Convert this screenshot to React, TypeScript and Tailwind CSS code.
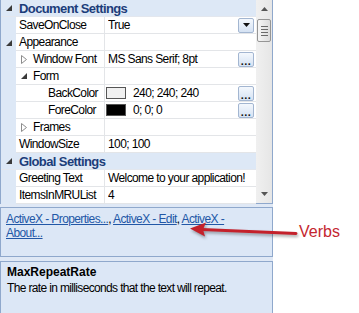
import React from "react";

const FONT = { fontFamily: '"Liberation Sans", Arial, sans-serif' };

function Expanded() {
  return (
    <svg width="6" height="6" viewBox="0 0 6 6" className="block">
      <polygon points="6,0 6,6 0,6" fill="#3a3a3a" />
    </svg>
  );
}

function Collapsed() {
  return (
    <svg width="6" height="9" viewBox="0 0 6 9" className="block">
      <polygon points="0.5,0.5 5.5,4.5 0.5,8.5" fill="none" stroke="#8c8c8c" strokeWidth="1" />
    </svg>
  );
}

function Btn({ kind }: { kind: "drop" | "dots" }) {
  return (
    <div className="mr-[2px] flex h-[15px] w-[16px] shrink-0 items-center justify-center rounded-[2px] border border-[#a3b6d1] bg-gradient-to-b from-[#f4f8fd] to-[#d5e2f3]">
      {kind === "drop" ? (
        <svg width="7" height="4" viewBox="0 0 7 4" className="block">
          <polygon points="0,0 7,0 3.5,4" fill="#111" />
        </svg>
      ) : (
        <span className="mt-[4px] text-[11px] font-bold leading-none tracking-[0.5px] text-[#111]">...</span>
      )}
    </div>
  );
}

function Header({ text }: { text: string }) {
  return (
    <div className="flex h-[17px] items-center border-b border-[#e3e7ee] bg-[#dde8f6]">
      <div className="flex w-[15px] shrink-0 items-center justify-start pl-[5px]">
        <Expanded />
      </div>
      <span className="pl-[3px] text-[13px] font-bold leading-[17px] tracking-[-0.6px] text-[#1c3d7a]">{text}</span>
    </div>
  );
}

type RowProps = {
  level: 0 | 1 | 2;
  tri?: "exp" | "col";
  name: string;
  children?: React.ReactNode;
};

function Row({ level, tri, name, children }: RowProps) {
  return (
    <div className="flex h-[17px]">
      <div className="flex w-[15px] shrink-0 items-center bg-[#dde8f6] pl-[5px]">
        {level === 0 && tri === "exp" ? <Expanded /> : null}
      </div>
      <div className="flex h-[17px] w-[89px] shrink-0 items-center border-b border-r border-[#e3e5e8] bg-white">
        {level === 0 && <div className="w-[3px] shrink-0" />}
        {level === 1 && (
          <div className="ml-[5px] mr-[6px] flex w-[6px] shrink-0 items-center">
            {tri === "exp" ? <Expanded /> : tri === "col" ? <Collapsed /> : null}
          </div>
        )}
        {level === 2 && <div className="w-[32px] shrink-0" />}
        <span className="whitespace-nowrap text-[12px] leading-[16px] tracking-[-0.6px] text-black">{name}</span>
      </div>
      <div className="flex h-[17px] min-w-0 flex-1 items-center border-b border-[#e3e5e8] bg-white">{children}</div>
    </div>
  );
}

function Val({ text, swatch, btn }: { text: string; swatch?: string; btn?: "drop" | "dots" }) {
  return (
    <>
      {swatch ? (
        <div className="ml-[1px] mr-[7px] h-[12px] w-[20px] shrink-0 border border-[#555]" style={{ backgroundColor: swatch }} />
      ) : (
        <div className="w-[3px] shrink-0" />
      )}
      <span className="flex-1 overflow-hidden whitespace-nowrap text-[12px] leading-[16px] tracking-[-0.6px] text-black">{text}</span>
      {btn ? <Btn kind={btn} /> : null}
    </>
  );
}

function Scrollbar() {
  return (
    <div className="flex w-[16px] shrink-0 flex-col items-center bg-gradient-to-r from-[#f0f0f0] to-[#e6e6e6]">
      <div className="flex h-[18px] w-full items-center justify-center">
        <svg width="7" height="4" viewBox="0 0 7 4" className="block">
          <polygon points="3.5,0 7,4 0,4" fill="#555" />
        </svg>
      </div>
      <div className="mt-[1px] flex h-[23px] w-[14px] flex-col items-center justify-center gap-[2px] rounded-[2px] border border-[#959595] bg-gradient-to-r from-[#f6f6f6] to-[#dcdcdc]">
        <div className="h-px w-[7px] bg-[#6a6a6a]" />
        <div className="h-px w-[7px] bg-[#6a6a6a]" />
        <div className="h-px w-[7px] bg-[#6a6a6a]" />
        <div className="h-px w-[7px] bg-[#6a6a6a]" />
      </div>
      <div className="flex-1" />
      <div className="flex h-[18px] w-full items-center justify-center">
        <svg width="7" height="4" viewBox="0 0 7 4" className="block">
          <polygon points="0,0 7,0 3.5,4" fill="#555" />
        </svg>
      </div>
    </div>
  );
}

export default function App() {
  return (
    <div className="relative h-[313px] w-[359px] overflow-hidden bg-white" style={FONT}>
      <div className="flex h-[313px] w-[273px] flex-col bg-[#dfe8f5]">
        <div className="flex h-[204px] shrink-0 border-b border-l border-r border-[#8fa8cc]">
          <div className="flex min-w-0 flex-1 flex-col">
            <Header text="Document Settings" />
            <Row level={0} name="SaveOnClose">
              <Val text="True" btn="drop" />
            </Row>
            <Row level={0} tri="exp" name="Appearance" />
            <Row level={1} tri="col" name="Window Font">
              <Val text="MS Sans Serif; 8pt" btn="dots" />
            </Row>
            <Row level={1} tri="exp" name="Form" />
            <Row level={2} name="BackColor">
              <Val text="240; 240; 240" swatch="#f0f0f0" btn="dots" />
            </Row>
            <Row level={2} name="ForeColor">
              <Val text="0; 0; 0" swatch="#000000" btn="dots" />
            </Row>
            <Row level={1} tri="col" name="Frames" />
            <Row level={0} name="WindowSize">
              <Val text="100; 100" />
            </Row>
            <Header text="Global Settings" />
            <Row level={0} name="Greeting Text">
              <Val text="Welcome to your application!" />
            </Row>
            <Row level={0} name="ItemsInMRUList">
              <Val text="4" />
            </Row>
          </div>
          <Scrollbar />
        </div>
        <div className="h-[3px] shrink-0" />
        <div className="h-[50px] shrink-0 border border-[#8fa8cc] bg-[#dce7f6] px-[5px] pt-[4px]">
          <p className="text-[12px] leading-[14px] tracking-[-0.6px] text-[#2257a6]">
            <span className="underline">ActiveX - Properties...</span>
            <span className="text-black">, </span>
            <span className="underline">ActiveX - Edit</span>
            <span className="text-black">, </span>
            <span className="underline">
              ActiveX -<br />
              About...
            </span>
          </p>
        </div>
        <div className="h-[4px] shrink-0" />
        <div className="flex-1 border-l border-r border-t border-[#8fa8cc] bg-[#dce7f6] px-[6px] pt-[2px]">
          <div className="text-[12px] font-bold leading-[16px] text-black">MaxRepeatRate</div>
          <div className="text-[12px] leading-[16px] tracking-[-0.65px] text-black">The rate in milliseconds that the text will repeat.</div>
        </div>
      </div>

      <svg
        className="absolute left-[186px] top-[218px]"
        width="115"
        height="24"
        viewBox="0 0 115 24"
        style={{ filter: "drop-shadow(1px 2px 1.5px rgba(0,0,0,0.35))" }}
      >
        <line x1="16" y1="11.5" x2="110" y2="15.5" stroke="#c4212b" strokeWidth="3" strokeLinecap="round" />
        <polygon points="4,10.5 20,4.5 17,11.5 19,18.5" fill="#c4212b" />
      </svg>
      <div className="absolute left-[299px] top-[222px] text-[16px] leading-[20px] text-[#c4262f]">Verbs</div>
    </div>
  );
}
